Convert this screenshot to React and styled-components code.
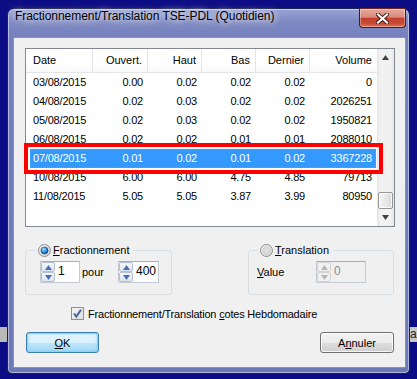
import styled, { createGlobalStyle } from "styled-components";

const UI_FONT = `"Liberation Sans", Arial, sans-serif`;

const GlobalStyle = createGlobalStyle`
  html, body {
    margin: 0;
    padding: 0;
    background: #0c0c84;
  }
`;

const columns = [
  { key: "date", label: "Date", align: "left", width: 67 },
  { key: "open", label: "Ouvert.", align: "right", width: 55 },
  { key: "high", label: "Haut", align: "right", width: 54 },
  { key: "low", label: "Bas", align: "right", width: 54 },
  { key: "last", label: "Dernier", align: "right", width: 54 },
  { key: "volume", label: "Volume", align: "right", width: 67 },
];

const rows = [
  { date: "03/08/2015", open: "0.00", high: "0.02", low: "0.02", last: "0.02", volume: "0" },
  { date: "04/08/2015", open: "0.02", high: "0.03", low: "0.02", last: "0.02", volume: "2026251" },
  { date: "05/08/2015", open: "0.02", high: "0.03", low: "0.02", last: "0.02", volume: "1950821" },
  { date: "06/08/2015", open: "0.02", high: "0.02", low: "0.01", last: "0.01", volume: "2088010" },
  { date: "07/08/2015", open: "0.01", high: "0.02", low: "0.01", last: "0.02", volume: "3367228", selected: true },
  { date: "10/08/2015", open: "6.00", high: "6.00", low: "4.75", last: "4.85", volume: "79713" },
  { date: "11/08/2015", open: "5.05", high: "5.05", low: "3.87", last: "3.99", volume: "80950" },
];

const gridColumns = columns.map(c => `${c.width}px`).join(" ");

function Arrow({ dir = "up", color = "#3f3f3f", size = 7 }) {
  const h = Math.ceil(size / 2) + 1;
  const points = dir === "up"
    ? `0,${h} ${size / 2},0 ${size},${h}`
    : `0,0 ${size / 2},${h} ${size},0`;
  return (
    <svg width={size} height={h} viewBox={`0 0 ${size} ${h}`}>
      <polygon points={points} fill={color} />
    </svg>
  );
}

function Radio({ checked }) {
  return (
    <svg width="13" height="13" viewBox="0 0 13 13">
      <defs>
        <linearGradient id={checked ? "ringOn" : "ringOff"} x1="0" y1="0" x2="1" y2="1">
          <stop offset="0" stopColor="#f4f4f4" />
          <stop offset="1" stopColor="#d2d2d2" />
        </linearGradient>
        <radialGradient id="dot" cx="0.4" cy="0.35" r="0.7">
          <stop offset="0" stopColor="#b9e6ff" />
          <stop offset="0.45" stopColor="#3a9ee0" />
          <stop offset="1" stopColor="#0b3f7a" />
        </radialGradient>
      </defs>
      <circle cx="6.5" cy="6.5" r="6" fill={`url(#${checked ? "ringOn" : "ringOff"})`} stroke="#8e8f8f" />
      {checked
        ? <circle cx="6.5" cy="6.5" r="3.6" fill="url(#dot)" stroke="#1b4f86" strokeWidth="0.6" />
        : <circle cx="6.5" cy="6.5" r="3.6" fill="#dcdcdc" stroke="#c4c4c4" strokeWidth="0.6" />}
    </svg>
  );
}

function SpinBox({ value, width, disabled }) {
  const arrow = disabled ? "#b5b5b5" : "#4a6fb0";
  return (
    <Spin $width={width} $disabled={disabled}>
      <SpinButtons>
        <SpinButton $disabled={disabled}><Arrow dir="up" color={arrow} size={7} /></SpinButton>
        <SpinButton $disabled={disabled}><Arrow dir="down" color={arrow} size={7} /></SpinButton>
      </SpinButtons>
      <SpinValue $disabled={disabled}>{value}</SpinValue>
    </Spin>
  );
}

export default function App() {
  return (
    <>
      <GlobalStyle />
      <Desktop>
        <BehindLeft />
        <BehindRight>a</BehindRight>
        <Window>
          <TitleBar>
            <Title>Fractionnement/Translation TSE-PDL (Quotidien)</Title>
            <CloseButton>
              <svg width="13" height="11" viewBox="0 0 13 11">
                <path d="M2 1.5 L11 9.5 M11 1.5 L2 9.5" stroke="#3a1410" strokeWidth="4" strokeLinecap="square" />
                <path d="M2 1.5 L11 9.5 M11 1.5 L2 9.5" stroke="#ffffff" strokeWidth="2.2" strokeLinecap="square" />
              </svg>
            </CloseButton>
          </TitleBar>
          <Client>
            <ListView>
              <TableArea>
                <HeaderRow>
                  {columns.map(col => (
                    <HeaderCell key={col.key} $align={col.align}>{col.label}</HeaderCell>
                  ))}
                </HeaderRow>
                {rows.map(row => (
                  <Row key={row.date} $selected={row.selected}>
                    {columns.map(col => (
                      <Cell key={col.key} $align={col.align}>{row[col.key]}</Cell>
                    ))}
                  </Row>
                ))}
              </TableArea>
              <ScrollBar>
                <ScrollButton><Arrow dir="up" color="#404040" /></ScrollButton>
                <ScrollTrack>
                  <ScrollThumb />
                </ScrollTrack>
                <ScrollButton><Arrow dir="down" color="#404040" /></ScrollButton>
              </ScrollBar>
              <Annotation />
            </ListView>

            <GroupRow>
              <Group $width={147} $padLeft={14}>
                <GroupLegend $shift={-4}>
                  <LegendInner>
                    <Radio checked />
                    <span><u>F</u>ractionnement</span>
                  </LegendInner>
                </GroupLegend>
                <FieldRow>
                  <SpinBox value="1" width={40} />
                  <PourLabel>pour</PourLabel>
                  <SpinBox value="400" width={41} />
                </FieldRow>
              </Group>
              <Group $width={146} $padLeft={8}>
                <GroupLegend $shift={1}>
                  <LegendInner>
                    <Radio />
                    <span><u>T</u>ranslation</span>
                  </LegendInner>
                </GroupLegend>
                <FieldRow>
                  <ValueLabel><u>V</u>alue</ValueLabel>
                  <SpinBox value="0" width={50} disabled />
                </FieldRow>
              </Group>
            </GroupRow>

            <CheckRow>
              <CheckBox>
                <svg width="11" height="11" viewBox="0 0 11 11">
                  <path d="M2 5.5 L4.3 8.5 L9 1.8" fill="none" stroke="#4a5f9c" strokeWidth="2" />
                </svg>
              </CheckBox>
              <CheckLabel>Fractionnement/Translation <u>c</u>otes Hebdomadaire</CheckLabel>
            </CheckRow>

            <ButtonRow>
              <Button $default $width={73}><u>O</u>K</Button>
              <Button $width={74}>A<u>n</u>nuler</Button>
            </ButtonRow>
          </Client>
        </Window>
      </Desktop>
    </>
  );
}

const Desktop = styled.div`
  position: relative;
  width: 417px;
  height: 379px;
  box-sizing: border-box;
  padding: 8px 0 0 7px;
  background: #0c0c84;
  overflow: hidden;
`;

const BehindLeft = styled.div`
  position: absolute;
  left: 0;
  top: 327px;
  width: 7px;
  height: 15px;
  background: #b9b9b9;
`;

const BehindRight = styled.div`
  position: absolute;
  left: 410px;
  top: 327px;
  width: 7px;
  height: 15px;
  background: #c8c8c8;
  font: 12px ${UI_FONT};
  line-height: 15px;
  color: #222;
  overflow: hidden;
`;

const Window = styled.div`
  width: 403px;
  height: 366px;
  box-sizing: border-box;
  border: 1px solid #1d2350;
  border-radius: 7px 7px 5px 5px;
  padding: 0 3px 5px 5px;
  display: flex;
  flex-direction: column;
  background: linear-gradient(180deg, #9aa4d4 0px, #7f8ac3 12px, #7380bc 30px, #6c79b6 100%);
  box-shadow: inset 0 0 0 1px rgba(255, 255, 255, 0.45);
`;

const TitleBar = styled.div`
  height: 28px;
  flex-shrink: 0;
  display: flex;
  justify-content: space-between;
  align-items: flex-start;
`;

const Title = styled.div`
  padding-left: 2px;
  line-height: 28px;
  font: 12px ${UI_FONT};
  letter-spacing: -0.05px;
  color: #000;
  white-space: nowrap;
  text-shadow: 0 0 6px #ffffff, 0 0 12px rgba(255, 255, 255, 0.8);
`;

const CloseButton = styled.div`
  width: 47px;
  height: 20px;
  margin-top: -1px;
  box-sizing: border-box;
  border: 1px solid #4a1712;
  border-top-color: #6a2a22;
  border-radius: 0 0 4px 4px;
  display: flex;
  align-items: center;
  justify-content: center;
  background: linear-gradient(180deg, #e7a89b 0%, #d98a7d 45%, #c2402d 52%, #c84a33 80%, #de7a5c 100%);
  box-shadow: inset 0 0 0 1px rgba(255, 255, 255, 0.35);
`;

const Client = styled.div`
  flex: 1;
  display: flex;
  flex-direction: column;
  align-items: flex-start;
  background: #f0f0f0;
  border: 1px solid #8790b6;
  padding: 10px 10px 0 11px;
  font: 11px ${UI_FONT};
  color: #000;
`;

const ListView = styled.div`
  position: relative;
  width: 370px;
  height: 179px;
  flex-shrink: 0;
  box-sizing: border-box;
  border: 1px solid #828790;
  background: #ffffff;
  display: flex;
`;

const TableArea = styled.div`
  flex: 1;
  overflow: hidden;
`;

const HeaderRow = styled.div`
  display: grid;
  grid-template-columns: ${gridColumns};
  height: 24px;
  box-sizing: border-box;
  border-bottom: 1px solid #e5e5e5;
  background: linear-gradient(180deg, #ffffff 0%, #ffffff 60%, #f7f8f9 100%);
`;

const HeaderCell = styled.div`
  line-height: 23px;
  border-right: 1px solid #e3e5e8;
  text-align: ${p => p.$align};
  padding: ${p => (p.$align === "left" ? "0 0 0 7px" : "0 5px 0 0")};
  white-space: nowrap;
  &:last-child {
    border-right: none;
  }
`;

const Row = styled.div`
  position: relative;
  display: grid;
  grid-template-columns: ${gridColumns};
  height: 19px;
  line-height: 19px;
  color: ${p => (p.$selected ? "#ffffff" : "#000000")};
  &::before {
    content: "";
    display: ${p => (p.$selected ? "block" : "none")};
    position: absolute;
    top: 0;
    bottom: 0;
    left: 4px;
    right: 1px;
    background: #3399ff;
    border: 1px dotted #c98a3a;
  }
`;

const Cell = styled.div`
  position: relative;
  text-align: ${p => p.$align};
  padding: ${p => (p.$align === "left" ? "0 0 0 7px" : "0 5px 0 0")};
  letter-spacing: -0.2px;
  white-space: nowrap;
`;

const ScrollBar = styled.div`
  width: 17px;
  display: flex;
  flex-direction: column;
  background: linear-gradient(90deg, #e4e4e4 0%, #f1f1f1 20%, #f1f1f1 80%, #e8e8e8 100%);
`;

const ScrollButton = styled.div`
  height: 17px;
  display: flex;
  align-items: center;
  justify-content: center;
`;

const ScrollTrack = styled.div`
  flex: 1;
  display: flex;
  flex-direction: column;
  justify-content: flex-end;
  align-items: center;
`;

const ScrollThumb = styled.div`
  width: 15px;
  height: 17px;
  box-sizing: border-box;
  border: 1px solid #979797;
  border-radius: 2px;
  background: linear-gradient(90deg, #f4f4f4 0%, #e9e9e9 50%, #d9d9d9 100%);
  box-shadow: inset 0 0 0 1px rgba(255, 255, 255, 0.8);
`;

const Annotation = styled.div`
  position: absolute;
  left: -2px;
  top: 94px;
  width: 359px;
  height: 31px;
  box-sizing: border-box;
  border: 4px solid #ff0000;
  pointer-events: none;
`;

const GroupRow = styled.div`
  width: 369px;
  margin-top: 17px;
  display: flex;
  justify-content: space-between;
`;

const Group = styled.fieldset`
  margin: 0;
  min-width: 0;
  width: ${p => p.$width}px;
  box-sizing: border-box;
  border: 1px solid #d5dfe5;
  border-radius: 3px;
  padding: 4px 6px 11px ${p => p.$padLeft}px;
`;

const GroupLegend = styled.legend`
  margin-left: ${p => p.$shift}px;
  padding: 0 4px 0 2px;
  height: 13px;
`;

const LegendInner = styled.span`
  display: inline-flex;
  align-items: center;
  gap: 2px;
  height: 13px;
  line-height: 13px;
`;

const FieldRow = styled.div`
  display: flex;
  align-items: center;
`;

const PourLabel = styled.span`
  width: 38px;
  padding-left: 2px;
  box-sizing: border-box;
`;

const ValueLabel = styled.span`
  width: 59px;
`;

const Spin = styled.div`
  width: ${p => p.$width}px;
  height: 22px;
  box-sizing: border-box;
  display: flex;
  border: 1px solid #c5c9d2;
  border-top-color: #abadb3;
  background: ${p => (p.$disabled ? "#f0f0f0" : "#ffffff")};
`;

const SpinButtons = styled.div`
  width: 14px;
  display: flex;
  flex-direction: column;
`;

const SpinButton = styled.div`
  flex: 1;
  display: flex;
  align-items: center;
  justify-content: center;
  border: 1px solid ${p => (p.$disabled ? "#d4d4d4" : "#b4bfd3")};
  border-radius: 2px;
  background: ${p => (p.$disabled ? "#f0f0f0" : "linear-gradient(180deg, #f6f8fb, #dde4ef)")};
`;

const SpinValue = styled.span`
  padding-left: 3px;
  font-size: 12px;
  line-height: 18px;
  color: ${p => (p.$disabled ? "#8d8d8d" : "#000")};
`;

const CheckRow = styled.div`
  margin: 12px 0 0 46px;
  display: flex;
  align-items: center;
  gap: 4px;
  height: 13px;
`;

const CheckLabel = styled.span`
  letter-spacing: -0.2px;
  white-space: nowrap;
`;

const CheckBox = styled.div`
  width: 13px;
  height: 13px;
  box-sizing: border-box;
  border: 1px solid #8e8f8f;
  background: linear-gradient(135deg, #f4f4f4, #dedede);
  display: flex;
  align-items: center;
  justify-content: center;
`;

const ButtonRow = styled.div`
  width: 369px;
  margin-top: 12px;
  display: flex;
  justify-content: space-between;
  padding-left: 1px;
  box-sizing: border-box;
`;

const Button = styled.div`
  width: ${p => p.$width}px;
  height: 21px;
  box-sizing: border-box;
  border: 1px solid ${p => (p.$default ? "#3c7fb1" : "#707070")};
  border-radius: 3px;
  display: flex;
  align-items: center;
  justify-content: center;
  background: ${p =>
    p.$default
      ? "linear-gradient(180deg, #eaf6fd 0%, #d9f0fc 50%, #bee6fd 51%, #a7d9f5 100%)"
      : "linear-gradient(180deg, #f2f2f2 0%, #ebebeb 50%, #dddddd 51%, #cfcfcf 100%)"};
  box-shadow: ${p =>
    p.$default
      ? "inset 0 0 0 1px #7fd6f7, inset 0 0 3px 1px rgba(72, 205, 250, 0.5)"
      : "inset 0 0 0 1px rgba(255, 255, 255, 0.8)"};
`;
